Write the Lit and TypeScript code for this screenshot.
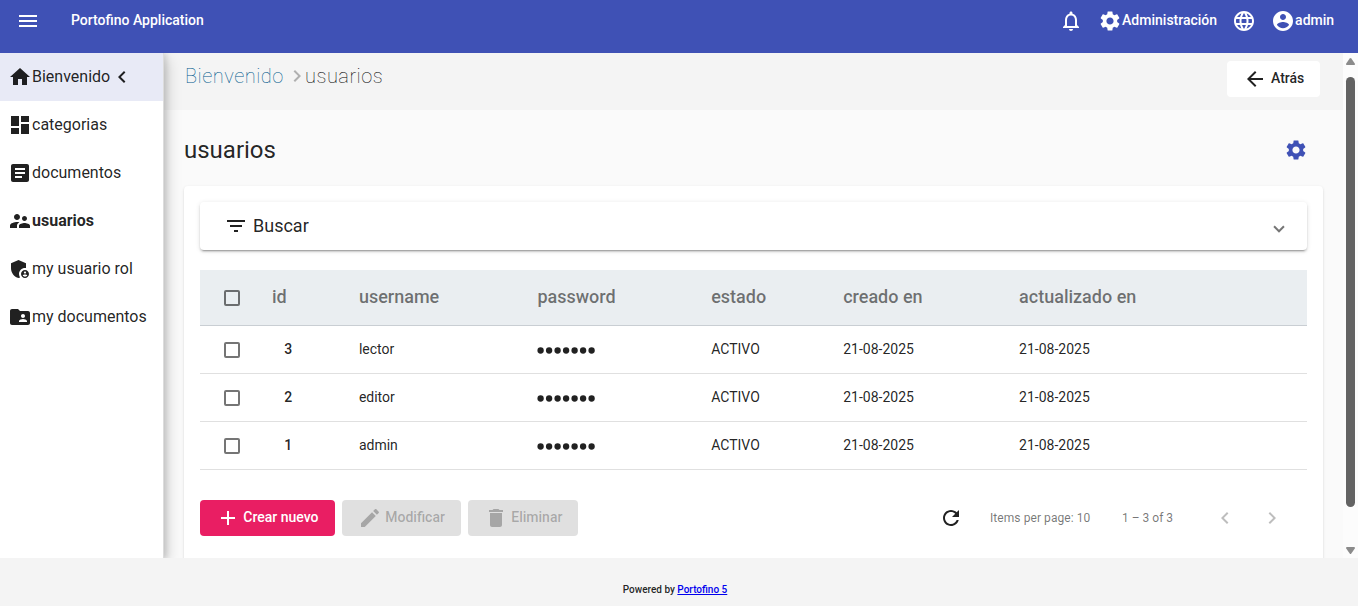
import { LitElement, html, css, svg } from "lit";
import { customElement, property } from "lit/decorators.js";
import { classMap } from "lit/directives/class-map.js";

const ICONS: Record<string, string> = {
  menu: "M3 18h18v-2H3v2zm0-5h18v-2H3v2zm0-7v2h18V6H3z",
  bell: "M12 22c1.1 0 2-.9 2-2h-4c0 1.1.9 2 2 2zm6-6v-5c0-3.07-1.63-5.64-4.5-6.32V4c0-.83-.67-1.5-1.5-1.5s-1.5.67-1.5 1.5v.68C7.64 5.36 6 7.92 6 11v5l-2 2v1h16v-1l-2-2zm-2 1H8v-6c0-2.48 1.51-4.5 4-4.5s4 2.02 4 4.5v6z",
  settings: "M19.14 12.94c.04-.3.06-.61.06-.94 0-.32-.02-.64-.07-.94l2.03-1.58c.18-.14.23-.41.12-.61l-1.92-3.32c-.12-.22-.37-.29-.59-.22l-2.39.96c-.5-.38-1.03-.7-1.62-.94l-.36-2.54c-.04-.24-.24-.41-.48-.41h-3.84c-.24 0-.43.17-.47.41l-.36 2.54c-.59.24-1.13.57-1.62.94l-2.39-.96c-.22-.08-.47 0-.59.22L2.74 8.87c-.12.21-.08.47.12.61l2.03 1.58c-.05.3-.09.63-.09.94s.02.64.07.94l-2.03 1.58c-.18.14-.23.41-.12.61l1.92 3.32c.12.22.37.29.59.22l2.39-.96c.5.38 1.03.7 1.62.94l.36 2.54c.05.24.24.41.48.41h3.84c.24 0 .44-.17.47-.41l.36-2.54c.59-.24 1.13-.56 1.62-.94l2.39.96c.22.08.47 0 .59-.22l1.92-3.32c.12-.22.07-.47-.12-.61l-2.01-1.58zM12 15.6c-1.98 0-3.6-1.62-3.6-3.6s1.62-3.6 3.6-3.6 3.6 1.62 3.6 3.6-1.62 3.6-3.6 3.6z",
  language: "M11.99 2C6.47 2 2 6.48 2 12s4.47 10 9.99 10C17.52 22 22 17.52 22 12S17.52 2 11.99 2zm6.93 6h-2.95c-.32-1.25-.78-2.45-1.38-3.56 1.84.63 3.37 1.91 4.33 3.56zM12 4.04c.83 1.2 1.48 2.53 1.91 3.96h-3.82c.43-1.43 1.08-2.76 1.91-3.96zM4.26 14C4.1 13.36 4 12.69 4 12s.1-1.36.26-2h3.38c-.08.66-.14 1.32-.14 2s.06 1.34.14 2H4.26zm.82 2h2.95c.32 1.25.78 2.45 1.38 3.56-1.84-.63-3.37-1.9-4.33-3.56zm2.95-8H5.08c.96-1.66 2.49-2.93 4.33-3.56C8.81 5.55 8.35 6.75 8.03 8zM12 19.96c-.83-1.2-1.48-2.53-1.91-3.96h3.82c-.43 1.43-1.08 2.76-1.91 3.96zM14.34 14H9.66c-.09-.66-.16-1.32-.16-2s.07-1.35.16-2h4.68c.09.65.16 1.32.16 2s-.07 1.34-.16 2zm.25 5.56c.6-1.11 1.06-2.31 1.38-3.56h2.95c-.96 1.65-2.49 2.93-4.33 3.56zM16.36 14c.08-.66.14-1.32.14-2s-.06-1.34-.14-2h3.38c.16.64.26 1.31.26 2s-.1 1.36-.26 2h-3.38z",
  account: "M12 2C6.48 2 2 6.48 2 12s4.48 10 10 10 10-4.48 10-10S17.52 2 12 2zm0 3c1.66 0 3 1.34 3 3s-1.34 3-3 3-3-1.34-3-3 1.34-3 3-3zm0 14.2c-2.5 0-4.71-1.28-6-3.22.03-1.99 4-3.08 6-3.08 1.99 0 5.97 1.09 6 3.08-1.29 1.94-3.5 3.22-6 3.22z",
  home: "M10 20v-6h4v6h5v-8h3L12 3 2 12h3v8z",
  dashboard: "M3 13h8V3H3v10zm0 8h8v-6H3v6zm10 0h8V11h-8v10zm0-18v6h8V3h-8z",
  article: "M19 3H5c-1.1 0-2 .9-2 2v14c0 1.1.9 2 2 2h14c1.1 0 2-.9 2-2V5c0-1.1-.9-2-2-2zm-5 14H7v-2h7v2zm3-4H7v-2h10v2zm0-4H7V7h10v2z",
  users: "M16.5 12c1.38 0 2.49-1.12 2.49-2.5S17.88 7 16.5 7C15.12 7 14 8.12 14 9.5s1.12 2.5 2.5 2.5zM9 11c1.66 0 2.99-1.34 2.99-3S10.66 5 9 5C7.34 5 6 6.34 6 8s1.34 3 3 3zm7.5 3c-1.83 0-5.5.92-5.5 2.75V19h11v-2.25c0-1.83-3.67-2.75-5.5-2.75zM9 13c-2.33 0-7 1.17-7 3.5V19h7v-2.25c0-.85.33-2.34 2.37-3.47C10.5 13.1 9.66 13 9 13z",
  role: "M17 11c.34 0 .67.04 1 .09V6.27L10.5 3 3 6.27v4.91c0 4.54 3.2 8.79 7.5 9.82.55-.13 1.08-.32 1.6-.55-.69-.98-1.1-2.17-1.1-3.45 0-3.31 2.69-6 6-6zM17 13c-2.21 0-4 1.79-4 4s1.79 4 4 4 4-1.79 4-4-1.79-4-4-4zm0 1.38c.62 0 1.12.51 1.12 1.12s-.51 1.12-1.12 1.12-1.12-.51-1.12-1.12.5-1.12 1.12-1.12zm0 5.37c-.93 0-1.74-.46-2.24-1.17.05-.72 1.51-1.08 2.24-1.08s2.19.36 2.24 1.08c-.5.71-1.31 1.17-2.24 1.17z",
  folder: "M20 6h-8l-2-2H4c-1.1 0-1.99.9-1.99 2L2 18c0 1.1.9 2 2 2h16c1.1 0 2-.9 2-2V8c0-1.1-.9-2-2-2zm-5 3c1.1 0 2 .9 2 2s-.9 2-2 2-2-.9-2-2 .9-2 2-2zm4 8h-8v-1c0-1.33 2.67-2 4-2s4 .67 4 2v1z",
  left: "M15.41 7.41L14 6l-6 6 6 6 1.41-1.41L10.83 12z",
  right: "M10 6L8.59 7.41 13.17 12l-4.58 4.59L10 18l6-6z",
  back: "M20 11H7.83l5.59-5.59L12 4l-8 8 8 8 1.41-1.41L7.83 13H20v-2z",
  filter: "M10 18h4v-2h-4v2zM3 6v2h18V6H3zm3 7h12v-2H6v2z",
  add: "M19 13h-6v6h-2v-6H5v-2h6V5h2v6h6v2z",
  edit: "M3 17.25V21h3.75L17.81 9.94l-3.75-3.75L3 17.25zM20.71 7.04c.39-.39.39-1.02 0-1.41l-2.34-2.34c-.39-.39-1.02-.39-1.41 0l-1.83 1.83 3.75 3.75 1.83-1.83z",
  trash: "M6 19c0 1.1.9 2 2 2h8c1.1 0 2-.9 2-2V7H6v12zM19 4h-3.5l-1-1h-5l-1 1H5v2h14V4z",
  refresh: "M17.65 6.35C16.2 4.9 14.21 4 12 4c-4.42 0-7.99 3.58-7.99 8s3.57 8 7.99 8c3.73 0 6.84-2.55 7.73-6h-2.08c-.82 2.33-3.04 4-5.65 4-3.31 0-6-2.69-6-6s2.69-6 6-6c1.66 0 3.14.69 4.22 1.78L13 11h7V4l-2.35 2.35z",
};

@customElement("md-icon")
class MdIcon extends LitElement {
  @property() name = "";
  static styles = css`
    :host { display: block; flex: none; width: 24px; height: 24px; }
    svg { display: block; fill: currentColor; }
  `;
  render() {
    return html`<svg width="24" height="24" viewBox="0 0 24 24">${svg`<path d=${ICONS[this.name] ?? ""}></path>`}</svg>`;
  }
}

@customElement("app-header")
class AppHeader extends LitElement {
  static styles = css`
    :host {
      display: flex; align-items: flex-start; height: 53px; box-sizing: border-box;
      padding: 9px 23.9px 0 16px; background: #3f51b5; color: #fff;
      font-size: 14px; font-weight: 500; line-height: 22px;
    }
    .title { margin-left: 31px; flex: 1; }
    .action { display: flex; }
    .bell { margin-right: 15px; }
    .admin { margin-right: 15px; }
    .lang { margin-right: 15px; }
  `;
  render() {
    return html`
      <md-icon name="menu"></md-icon>
      <span class="title">Portofino Application</span>
      <md-icon class="bell" name="bell"></md-icon>
      <span class="action admin"><md-icon name="settings"></md-icon>Administración</span>
      <md-icon class="lang" name="language"></md-icon>
      <span class="action"><md-icon name="account"></md-icon>admin</span>
    `;
  }
}

const PAGES = [
  { icon: "home", label: "Bienvenido", parent: true },
  { icon: "dashboard", label: "categorias" },
  { icon: "article", label: "documentos" },
  { icon: "users", label: "usuarios", current: true },
  { icon: "role", label: "my usuario rol" },
  { icon: "folder", label: "my documentos" },
];

@customElement("app-sidebar")
class AppSidebar extends LitElement {
  static styles = css`
    :host {
      display: block; width: 163px; background: #fff; border-right: 1px solid #dcdcdc; z-index: 1;
      box-shadow: 3px 0 5px rgba(0,0,0,.1), 3px 6px 14px rgba(0,0,0,.18);
    }
    .item { display: flex; align-items: center; height: 48px; padding-left: 8px; font-size: 16px; color: rgba(0,0,0,.87); }
    .label { line-height: 24px; }
    .parent { background: #e8eaf6; }
    .current { font-weight: 700; }
  `;
  render() {
    return PAGES.map((p) => html`
      <div class=${classMap({ item: true, parent: !!p.parent, current: !!p.current })}>
        <md-icon name=${p.icon}></md-icon><span class="label">${p.label}</span>
        ${p.parent ? html`<md-icon name="left"></md-icon>` : ""}
      </div>`);
  }
}

const USERS = [
  { id: 3, name: "lector" },
  { id: 2, name: "editor" },
  { id: 1, name: "admin" },
];

@customElement("users-table")
class UsersTable extends LitElement {
  static styles = css`
    :host { display: block; }
    .row {
      display: grid; grid-template-columns: 48px 86.9px 178.5px 173.8px 132px 175.9px 1fr;
      align-items: center; height: 47px; padding-left: 24px;
      border-bottom: 1px solid #e0e0e0; font-size: 14px; color: rgba(0,0,0,.87);
    }
    .head {
      height: 55px; background: #eaeef1; border-bottom-color: #c9ced3;
      font-size: 18px; font-weight: 500; color: rgba(0,0,0,.54);
    }
    .cell { line-height: 20px; padding-bottom: 2px; }
    .head .cell { line-height: 24px; padding-bottom: 1px; }
    .box { box-sizing: border-box; width: 16px; height: 16px; border: 2px solid rgba(0,0,0,.54); border-radius: 2px; }
    .id { padding-left: 12.3px; font-weight: 500; }
    .row > .box { margin-top: 1px; }
    .dots { display: block; height: 7px; padding-top: 1px; }
    .dots svg { display: block; fill: rgba(0,0,0,.87); }
  `;
  render() {
    return html`
      <div class="row head">
        <span class="box"></span>
        ${["id", "username", "password", "estado", "creado en", "actualizado en"].map((h) => html`<span class="cell">${h}</span>`)}
      </div>
      ${USERS.map((u) => html`
        <div class="row">
          <span class="box"></span>
          <span class="cell id">${u.id}</span>
          <span class="cell">${u.name}</span>
          <span class="dots"><svg width="60" height="7" viewBox="0 0 60 7">${[0, 1, 2, 3, 4, 5, 6].map((i) => svg`<circle cx=${3.6 + i * 8.5} cy="3.5" r="3.15"></circle>`)}</svg></span>
          <span class="cell">ACTIVO</span>
          <span class="cell">21-08-2025</span>
          <span class="cell">21-08-2025</span>
        </div>`)}
    `;
  }
}

@customElement("app-root")
class AppRoot extends LitElement {
  static styles = css`
    :host {
      display: flex; flex-direction: column; width: 1358px; height: 606px; overflow: hidden;
      font-family: Roboto, sans-serif; background: #f4f4f4; color: rgba(0,0,0,.87);
    }
    .body { display: flex; height: 505px; overflow: hidden; }
    .main { flex: 1; background: #fafafa; overflow: hidden; }
    .bar { display: flex; height: 57px; box-sizing: border-box; padding: 8px 23px 0 21px; background: #f4f4f4; }
    .crumbs { flex: 1; display: flex; font-size: 20px; font-weight: 100; line-height: 30px; letter-spacing: .5px; color: #000; }
    .crumbs md-icon { margin-top: 3px; color: #b0b0b0; }
    .parent { color: #00598c; width: 100px; }
    .here { margin-left: -4px; }
    .back {
      display: flex; width: 93px; height: 36px; box-sizing: border-box; padding: 6px 0 0 16px;
      background: #fff; border-radius: 4px; font-size: 14px; font-weight: 500; line-height: 23px;
    }
    .back span { margin-left: 4px; }
    .heading { display: flex; align-items: center; height: 76px; padding: 0 35px 0 20px; box-sizing: border-box; }
    .title { flex: 1; font-size: 24px; line-height: 32px; padding-top: 4px; }
    .heading md-icon { color: #3f51b5; padding-top: 4px; }
    .card {
      margin: 0 20px; height: 420px; padding: 16px; box-sizing: border-box; background: #fff; border-radius: 4px;
      box-shadow: 0 2px 1px -1px rgba(0,0,0,.1), 0 1px 1px rgba(0,0,0,.08), 0 1px 3px rgba(0,0,0,.12);
    }
    .search {
      display: flex; align-items: center; height: 48px; padding: 0 24px; margin-bottom: 20px; border-radius: 4px;
      font-size: 18px; box-shadow: 0 3px 1px -2px rgba(0,0,0,.2), 0 2px 2px rgba(0,0,0,.14), 0 1px 5px rgba(0,0,0,.12);
    }
    .search span { flex: 1; margin-left: 5px; line-height: 24px; }
    .chevron {
      width: 6px; height: 6px; margin-top: 2px; border: solid rgba(0,0,0,.54); border-width: 0 2px 2px 0;
      transform: rotate(45deg);
    }
    .tools { display: flex; gap: 7px; padding-top: 30px; align-items: flex-start; }
    .btn {
      display: flex; height: 36px; box-sizing: border-box; padding: 6px 0 0 16px; border-radius: 4px;
      font-size: 14px; font-weight: 500; line-height: 23px; gap: 3.3px;
      background: #e0e0e0; color: rgba(0,0,0,.26);
    }
    .create { width: 135px; background: #e91e63; color: #fff; }
    .edit { width: 119px; }
    .delete { width: 110px; }
    .pager { display: flex; align-items: center; margin-left: auto; height: 36px; padding-right: 23px; font-size: 12px; color: rgba(0,0,0,.54); }
    .pager md-icon { color: rgba(0,0,0,.26); }
    .pager .refresh { color: rgba(0,0,0,.87); margin-right: 27px; }
    .size { width: 132px; letter-spacing: .07px; }
    .range { width: 91px; }
    .next { margin-left: 23px; }
    .scroll { width: 15px; background: #fcfcfc; display: flex; flex-direction: column; align-items: center; box-sizing: border-box; padding: 5px 0 4px; }
    .scroll svg { fill: #8b8b8b; display: block; }
    .thumb { width: 9px; height: 430px; margin: 12px 0 auto; border-radius: 5px; background: #636363; }
    .footer { flex: 1; text-align: center; font-size: 10px; font-weight: 500; line-height: 16px; padding-top: 24px; padding-right: 8px; color: rgba(0,0,0,.87); }
    .footer a { color: #0000ee; }
  `;
  render() {
    return html`
      <app-header></app-header>
      <div class="body">
        <app-sidebar></app-sidebar>
        <div class="main">
          <div class="bar">
            <div class="crumbs"><span class="parent">Bienvenido</span><md-icon name="right"></md-icon><span class="here">usuarios</span></div>
            <div class="back"><md-icon name="back"></md-icon><span>Atrás</span></div>
          </div>
          <div class="heading"><span class="title">usuarios</span><md-icon name="settings"></md-icon></div>
          <div class="card">
            <div class="search"><md-icon name="filter"></md-icon><span>Buscar</span><i class="chevron"></i></div>
            <users-table></users-table>
            <div class="tools">
              <div class="btn create"><md-icon name="add"></md-icon>Crear nuevo</div>
              <div class="btn edit"><md-icon name="edit"></md-icon>Modificar</div>
              <div class="btn delete"><md-icon name="trash"></md-icon>Eliminar</div>
              <div class="pager">
                <md-icon class="refresh" name="refresh"></md-icon>
                <span class="size">Items per page: 10</span>
                <span class="range">1 – 3 of 3</span>
                <md-icon name="left"></md-icon>
                <md-icon class="next" name="right"></md-icon>
              </div>
            </div>
          </div>
        </div>
        <div class="scroll">
          <svg width="9" height="7" viewBox="0 0 9 7"><path d="M3.7.6Q4.5-.4 5.3.6L8.8 5.4Q9.3 7 8 7H1Q-.3 7 .2 5.4z"></path></svg>
          <div class="thumb"></div>
          <svg width="9" height="7" viewBox="0 0 9 7"><path d="M3.7 6.4Q4.5 7.4 5.3 6.4L8.8 1.6Q9.3 0 8 0H1Q-.3 0 .2 1.6z"></path></svg>
        </div>
      </div>
      <div class="footer">Powered by <a href="#">Portofino 5</a></div>
    `;
  }
}
